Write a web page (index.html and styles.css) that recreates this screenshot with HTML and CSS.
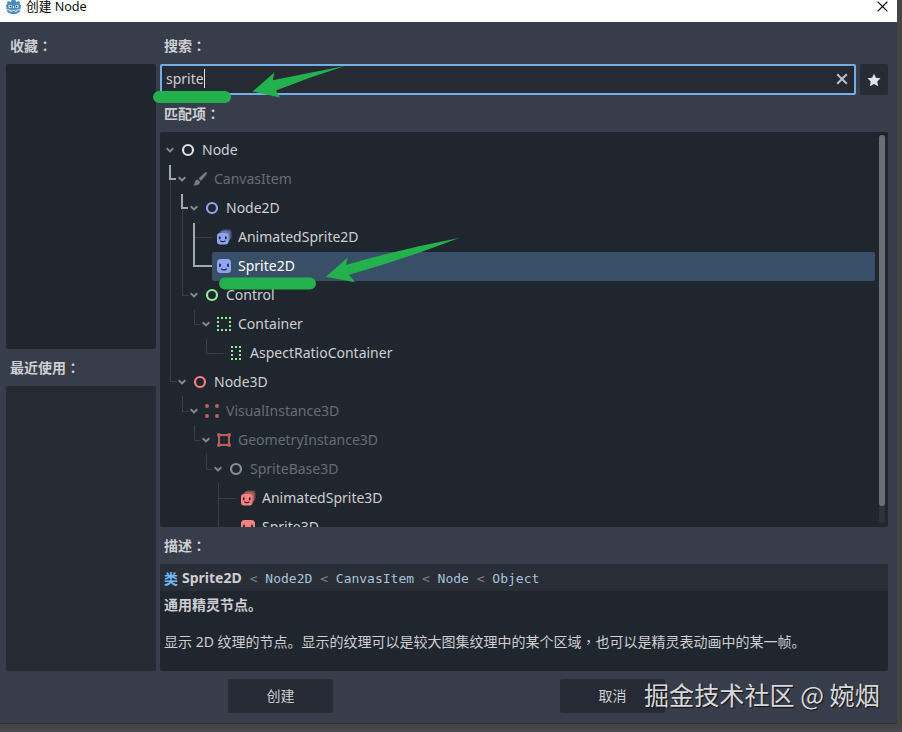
FILE: index.html
```html
<!DOCTYPE html>
<html lang="zh-CN">
<head>
    <meta charset="UTF-8">
    <title>创建 Node</title>
    <link rel="stylesheet" href="styles.css">
</head>
<body>
    <svg class="symbols" width="0" height="0">
        <symbol id="chevron" viewBox="0 0 10 8"><path d="M1.7 2.2L5 5.4L8.3 2.2" fill="none" stroke="#858a91" stroke-width="1.9"/></symbol>
        <symbol id="circle" viewBox="0 0 16 16"><circle cx="8" cy="8" r="5" fill="none" stroke="currentColor" stroke-width="2.2"/></symbol>
        <symbol id="brush" viewBox="0 0 16 16"><path d="M14.7 1.4c.5.5.3 1.2-.1 1.8L9 10 6.6 7.6l6.4-6c.5-.5 1.2-.7 1.7-.2zM5.7 8.5l2.4 2.3c-.2 3-3 4.2-6.9 3.6 1.9-1.2 1.1-2.5 1.8-4 .5-1.1 1.5-1.7 2.7-1.9z" fill="currentColor"/></symbol>
        <symbol id="sprite" viewBox="0 0 16 16">
            <rect x="1" y="1" width="14" height="14" rx="3.5" fill="currentColor"/>
            <path d="M4 6.5v1.5M12 6.5v1.5" stroke="#2a3350" stroke-width="2" stroke-linecap="round"/>
            <path d="M5 10.7q3 2.6 6 0" fill="none" stroke="#2a3350" stroke-width="1.3"/>
        </symbol>
        <symbol id="animated" viewBox="0 0 16 16">
            <rect x="5" y="0.5" width="10.5" height="10.5" rx="3" fill="currentColor" opacity=".4"/>
            <rect x="3" y="2" width="11" height="11" rx="3" fill="currentColor" opacity=".4"/>
            <rect x="1" y="4" width="11.5" height="11.5" rx="3" fill="currentColor"/>
            <path d="M3.7 8v1.5M9.8 8v1.5" stroke="#20262e" stroke-width="1.7" stroke-linecap="round"/>
            <path d="M4.2 11.7q2.6 2 5.2 0" fill="none" stroke="#20262e" stroke-width="1.2"/>
        </symbol>
        <symbol id="container" viewBox="0 0 16 16"><path d="M1 2h14M1 14h14M2 5v10M14 5v10" fill="none" stroke="currentColor" stroke-width="2" stroke-dasharray="2 2"/></symbol>
        <symbol id="aspect" viewBox="0 0 16 16"><path d="M3 2h10M3 14h10M4 5v8M12 5v8" fill="none" stroke="currentColor" stroke-width="2" stroke-dasharray="2 2"/></symbol>
        <symbol id="visual" viewBox="0 0 16 16"><g fill="currentColor"><circle cx="3" cy="3" r="2"/><circle cx="13" cy="3" r="2"/><circle cx="3" cy="13" r="2"/><circle cx="13" cy="13" r="2"/></g></symbol>
        <symbol id="geometry" viewBox="0 0 16 16"><path d="M3 3h10v10H3z" fill="none" stroke="currentColor" stroke-width="2"/><g fill="currentColor"><circle cx="3" cy="3" r="2"/><circle cx="13" cy="3" r="2"/><circle cx="3" cy="13" r="2"/><circle cx="13" cy="13" r="2"/></g></symbol>
    </svg>

    <div class="window">
        <header class="titlebar">
            <svg class="logo" width="15" height="14" viewBox="0 0 15 14">
                <path d="M1 2l2-1 1 1 1-.3L5.5 0h4L10 1.7l1 .3 1-1 2 1-.5 2 1.5 1-.5 4c0 3-3 5-7 5s-7-2-7-5L0 5l1.5-1z" fill="#478cbf"/>
                <circle cx="4.2" cy="6.5" r="1.8" fill="#fff"/><circle cx="10.8" cy="6.5" r="1.8" fill="#fff"/>
                <circle cx="4.4" cy="6.6" r="1" fill="#414042"/><circle cx="10.6" cy="6.6" r="1" fill="#414042"/>
                <path d="M7.5 6v2M1 9.5l3 .5.3 1.3h1.7l.2-1h2.6l.2 1h1.7L11 10l3-.5" fill="none" stroke="#fff" stroke-width=".8"/>
            </svg>
            <span class="title">创建 Node</span>
            <svg class="close" width="11" height="11" viewBox="0 0 11 11"><path d="M.6.6l9.8 9.8M10.4.6L.6 10.4" stroke="#000" stroke-width="1.2"/></svg>
        </header>

        <main class="dialog">
            <aside class="side">
                <h2 class="label">收藏<span class="punct" lang="zh-TW">：</span></h2>
                <div class="panel favorites"></div>
                <h2 class="label">最近使用<span class="punct" lang="zh-TW">：</span></h2>
                <div class="panel recent"></div>
            </aside>

            <section class="content">
                <h2 class="label">搜索<span class="punct" lang="zh-TW">：</span></h2>
                <div class="search-row">
                    <div class="search">
                        <span class="query">sprite</span>
                        <svg class="clear" width="12" height="12" viewBox="0 0 12 12"><path d="M1.2 1.2l9.6 9.6M10.8 1.2L1.2 10.8" stroke="#bcc0c6" stroke-width="2"/></svg>
                    </div>
                    <div class="star">
                        <svg width="14" height="14" viewBox="0 0 14 14"><path d="M7 .8l1.9 3.9 4.6.6-3.2 3.2.8 4.7L7 11.1l-4.1 2.1.8-4.7L.5 5.3l4.6-.6z" fill="#e2e4e6"/></svg>
                    </div>
                </div>
                <h2 class="label">匹配项<span class="punct" lang="zh-TW">：</span></h2>

                <div class="tree">
                    <svg class="guides" width="728" height="395" viewBox="0 0 728 395">
                        <path class="dim" d="M10.5 47v202.5h6M22.5 76v87.5h6M35 105.5h17M34.5 178v14.5h6M46.5 207v14.5h17M22.5 264v15.5h6M34.5 293v15.5h6M46.5 322v15.5h6M58.5 351v44M58.5 366.5h17"/>
                        <path class="lit" d="M10 33v14h6M22 62v14h6M34 91v43h18"/>
                    </svg>
                    <div class="row d0"><svg class="arrow"><use href="#chevron"/></svg><svg class="icon white"><use href="#circle"/></svg><span>Node</span></div>
                    <div class="row d1 off"><svg class="arrow"><use href="#chevron"/></svg><svg class="icon"><use href="#brush"/></svg><span>CanvasItem</span></div>
                    <div class="row d2"><svg class="arrow"><use href="#chevron"/></svg><svg class="icon blue"><use href="#circle"/></svg><span>Node2D</span></div>
                    <div class="row d3 leaf"><svg class="icon blue"><use href="#animated"/></svg><span>AnimatedSprite2D</span></div>
                    <div class="row d3 leaf selected"><svg class="icon blue"><use href="#sprite"/></svg><span>Sprite2D</span></div>
                    <div class="row d2"><svg class="arrow"><use href="#chevron"/></svg><svg class="icon green"><use href="#circle"/></svg><span>Control</span></div>
                    <div class="row d3"><svg class="arrow"><use href="#chevron"/></svg><svg class="icon green"><use href="#container"/></svg><span>Container</span></div>
                    <div class="row d4 leaf"><svg class="icon green"><use href="#aspect"/></svg><span>AspectRatioContainer</span></div>
                    <div class="row d1"><svg class="arrow"><use href="#chevron"/></svg><svg class="icon red"><use href="#circle"/></svg><span>Node3D</span></div>
                    <div class="row d2 off"><svg class="arrow"><use href="#chevron"/></svg><svg class="icon dark-red"><use href="#visual"/></svg><span>VisualInstance3D</span></div>
                    <div class="row d3 off"><svg class="arrow"><use href="#chevron"/></svg><svg class="icon dark-red"><use href="#geometry"/></svg><span>GeometryInstance3D</span></div>
                    <div class="row d4 off"><svg class="arrow"><use href="#chevron"/></svg><svg class="icon gray"><use href="#circle"/></svg><span>SpriteBase3D</span></div>
                    <div class="row d5 leaf"><svg class="icon red"><use href="#animated"/></svg><span>AnimatedSprite3D</span></div>
                    <div class="row d5 leaf"><svg class="icon red"><use href="#sprite"/></svg><span>Sprite3D</span></div>
                    <div class="scrollbar"><div class="thumb"></div></div>
                </div>

                <h2 class="label">描述<span class="punct" lang="zh-TW">：</span></h2>
                <div class="help">
                    <div class="inherits"><b class="kind">类</b><b>Sprite2D</b><code><i>&lt;</i> Node2D <i>&lt;</i> CanvasItem <i>&lt;</i> Node <i>&lt;</i> Object</code></div>
                    <p class="brief">通用精灵节点。</p>
                    <p class="detail">显示 2D 纹理的节点。显示的纹理可以是较大图集纹理中的某个区域<span class="punct" lang="zh-TW">，</span>也可以是精灵表动画中的某一帧。</p>
                </div>
            </section>
        </main>

        <footer class="buttons">
            <div class="button">创建</div>
            <div class="button">取消</div>
        </footer>
    </div>

    <svg class="marks" width="902" height="732" viewBox="0 0 902 732">
        <path d="M159 97h66M225 283.5h85" stroke="#22b14c" stroke-width="12" stroke-linecap="round"/>
        <path d="M252.5 91.5L274.3 72.5L272.8 80.3Q308 73 345 66Q310 77 276 90.5L280 97.5Z" fill="#22b14c"/>
        <path d="M326 276.7L347.7 257.5L346 265Q400 249 459 238Q405 259 349 274.7L355 282.3Z" fill="#22b14c"/>
    </svg>
    <div class="watermark">掘金技术社区 @ 婉烟</div>
</body>
</html>
```

FILE: styles.css
```css
body {
    margin: 0;
    height: 732px;
    overflow: hidden;
    position: relative;
    background: linear-gradient(#454545 0, #454643 728px, #4d4658 730px);
    font-family: "Noto Sans", "Noto Sans CJK SC", sans-serif;
    font-size: 14px;
    color: #cdcfd2;
}
.symbols {
    position: absolute;
}
.window {
    width: 897px;
    height: 723px;
    background: #373d4a;
    border-bottom: 1px solid #2c303a;
}
.titlebar {
    display: flex;
    align-items: flex-start;
    box-sizing: border-box;
    height: 22px;
    padding: 0 9px 0 6px;
    background: #fff;
    color: #000;
}
.title {
    flex: 1;
    margin-left: 5px;
    font-family: "Open Sans", "Noto Sans CJK SC", sans-serif;
    font-size: 12.7px;
    line-height: 12px;
}
.close {
    margin-top: 1px;
}
.dialog {
    display: grid;
    grid-template-columns: 150px 728px;
    gap: 4px;
    height: 649px;
    padding-left: 6px;
}
.label {
    box-sizing: border-box;
    height: 37px;
    margin: 0;
    padding-left: 4px;
    font-size: 14px;
    font-weight: 700;
    line-height: 37px;
}
.label:first-child {
    height: 42px;
    line-height: 47px;
}
/* centred full-width colon and comma */
.punct {
    font-family: "Noto Sans CJK TC", sans-serif;
    line-height: 1;
}
.panel {
    height: 285px;
    border-radius: 2px;
    background: #252a33;
}
.favorites {
    background: #21262e;
}
.search-row {
    display: flex;
    gap: 4px;
    height: 31px;
}
.search {
    flex: 1;
    display: flex;
    align-items: flex-start;
    justify-content: space-between;
    padding: 3px 6px 0 4px;
    border: 2px solid #70b0e6;
    border-radius: 2px;
    background: #252a33;
}
.query {
    border-right: 1px solid #e0e0e0;
    line-height: 19px;
}
.clear {
    margin-top: 4px;
}
.star {
    display: flex;
    align-items: center;
    justify-content: center;
    width: 28px;
    border-radius: 2px;
    background: #262b35;
}
.tree {
    position: relative;
    box-sizing: border-box;
    height: 395px;
    padding-top: 4px;
    overflow: hidden;
    border-radius: 2px;
    background: #20262d;
}
.guides {
    position: absolute;
    top: 0;
    left: 0;
}
.guides path {
    fill: none;
}
.dim {
    stroke: #3b4047;
}
.lit {
    stroke: #a5a8ac;
    stroke-width: 2;
}
.row {
    display: flex;
    align-items: center;
    height: 29px;
    margin-right: 13px;
    padding-left: 5px;
}
.row span {
    padding-bottom: 2px;
}
.d1 { margin-left: 12px; }
.d2 { margin-left: 24px; }
.d3 { margin-left: 36px; }
.d4 { margin-left: 48px; }
.d5 { margin-left: 60px; }
.leaf {
    padding-left: 20px;
}
.arrow {
    width: 10px;
    height: 8px;
    margin: 0 5px 1px 0;
}
.icon {
    width: 16px;
    height: 16px;
    margin: 0 6px 1px 0;
}
.selected {
    margin-left: 52px;
    padding-left: 4px;
    border-radius: 2px;
    background: #394f68;
    color: #fff;
}
.off { color: #686c72; }
.off .icon { color: #777a7f; }
.white { color: #e0e0e0; }
.blue { color: #8da5f3; }
.green { color: #8eef97; }
.red { color: #fc7f7f; }
.off .dark-red { color: #b8605f; }
.off .gray { color: #8b8e90; }
.scrollbar {
    position: absolute;
    top: 3px;
    right: 3px;
    width: 6px;
    height: 388px;
    border-radius: 3px;
    background: #2e323b;
}
.thumb {
    height: 371px;
    border-radius: 3px;
    background: #6a6e76;
}
.help {
    height: 107px;
    border-radius: 2px;
    background: #20262d;
}
.inherits {
    display: flex;
    align-items: center;
    box-sizing: border-box;
    height: 27px;
    padding: 0 0 0 4px;
    background: #292d35;
}
.kind {
    margin-right: 4px;
    color: #70baf9;
}
code {
    margin-left: 8px;
    padding-top: 2px;
    font-family: "DejaVu Sans Mono", monospace;
    font-size: 13px;
    color: #a5c4dc;
    white-space: nowrap;
}
code i {
    font-style: normal;
    color: #7b8187;
}
.brief,
.detail {
    margin: 0;
    padding-left: 4px;
    line-height: 28px;
}
.brief {
    font-weight: 700;
}
.detail {
    padding-top: 9px;
    white-space: nowrap;
}
.buttons {
    display: flex;
    gap: 227px;
    padding: 8px 0 0 228px;
}
.button {
    width: 105px;
    height: 34px;
    border-radius: 2px;
    background: #252a34;
    line-height: 34px;
    text-align: center;
}
.marks {
    position: absolute;
    top: 0;
    left: 0;
}
.watermark {
    position: absolute;
    top: 676px;
    left: 644px;
    font-family: "Noto Sans CJK SC", sans-serif;
    font-size: 25.1px;
    line-height: 36px;
    color: #d7d8dc;
    text-shadow: 1px 1px 1px #111;
    white-space: nowrap;
}
```
